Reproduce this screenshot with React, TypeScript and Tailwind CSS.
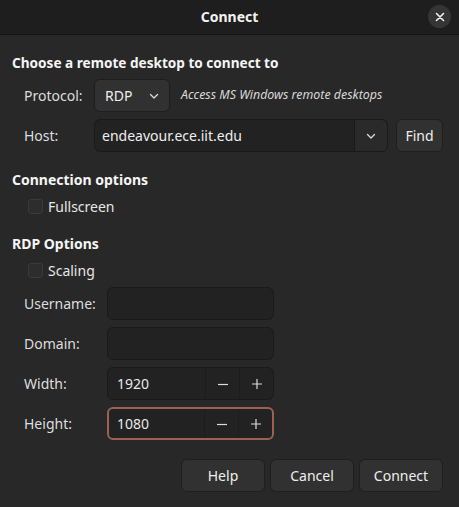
import React from "react";

const font = { fontFamily: '"Noto Sans", "Open Sans", sans-serif' };

function Chevron() {
  return (
    <svg width="12" height="12" viewBox="0 0 12 12" fill="none">
      <path d="M2.5 4.5 L6 8 L9.5 4.5" stroke="#dcdcdc" strokeWidth="1.3" strokeLinecap="round" strokeLinejoin="round" />
    </svg>
  );
}

function Check({ label }: { label: string }) {
  return (
    <div className="flex items-center h-5 pl-[28px]">
      <div className="w-[15px] h-[15px] rounded-[3px] bg-[#2d2d2d] border border-[#3a3a3a]" />
      <span className="ml-[5px] text-[14px] text-[#e6e6e6]">{label}</span>
    </div>
  );
}

function Entry({ label }: { label: string }) {
  return (
    <div className="flex items-center mt-[7px]">
      <span className="w-[107px] shrink-0 pl-[24px] text-[14px] text-[#dedede]">{label}</span>
      <div className="w-[167px] h-[33px] shrink-0 rounded-[6px] bg-[#222222] border border-[#1a1a1a]" />
    </div>
  );
}

function Spin({ label, value, focus }: { label: string; value: string; focus?: boolean }) {
  return (
    <div className="flex items-center mt-[7px]">
      <span className="w-[107px] shrink-0 pl-[24px] text-[14px] text-[#dedede]">{label}</span>
      <div
        className={`w-[167px] h-[33px] shrink-0 rounded-[6px] bg-[#222222] flex items-stretch ${
          focus ? "border-2 border-[#9a6154]" : "border border-[#1a1a1a]"
        }`}
      >
        <div className={`flex-1 flex items-center text-[14px] text-[#e8e8e8] ${focus ? "pl-[8px]" : "pl-[9px]"}`}>{value}</div>
        <div className="w-[34px] flex items-center justify-center border-l border-[#1c1c1c]">
          <svg width="12" height="12" viewBox="0 0 12 12"><path d="M1 6.5 H11" stroke="#dcdcdc" strokeWidth="1.2" /></svg>
        </div>
        <div className="w-[34px] flex items-center justify-center border-l border-[#1c1c1c]">
          <svg width="12" height="12" viewBox="0 0 12 12"><path d="M1 6 H11 M6 1 V11" stroke="#dcdcdc" strokeWidth="1.2" /></svg>
        </div>
      </div>
    </div>
  );
}

export default function App() {
  return (
    <div style={font} className="w-[459px] h-[507px] bg-[#282828] flex flex-col overflow-hidden">
      <div className="h-[35px] shrink-0 bg-[#1e1e1e] border-b border-[#151515] relative flex items-center justify-center">
        <span className="text-[14px] font-bold text-[#f2f2f2] -mt-[2px]">Connect</span>
        <div className="absolute right-[8px] top-[5px] w-[23px] h-[23px] rounded-full bg-[#353535] flex items-center justify-center">
          <svg width="10" height="10" viewBox="0 0 10 10">
            <path d="M1.5 1.5 L8.5 8.5 M8.5 1.5 L1.5 8.5" stroke="#f0f0f0" strokeWidth="1.6" strokeLinecap="round" />
          </svg>
        </div>
      </div>

      <div className="flex flex-col">
        <div className="mt-[18px] pl-[12px] h-5 leading-5 text-[13.6px] font-bold text-[#f5f5f5]">
          Choose a remote desktop to connect to
        </div>

        <div className="flex items-center mt-[6px]">
          <span className="w-[94px] shrink-0 pl-[24px] text-[14px] text-[#dedede]">Protocol:</span>
          <div className="w-[76px] h-[33px] shrink-0 rounded-[6px] bg-[#313131] border border-[#1e1e1e] flex items-center pl-[10px] pr-[9px] justify-between">
            <span className="text-[14px] text-[#eeeeee]">RDP</span>
            <Chevron />
          </div>
          <span className="ml-[11px] text-[12.4px] italic text-[#d8d8d8] whitespace-nowrap">Access MS Windows remote desktops</span>
        </div>

        <div className="flex items-center mt-[7px]">
          <span className="w-[94px] shrink-0 pl-[24px] text-[14px] text-[#dedede]">Host:</span>
          <div className="w-[294px] h-[33px] shrink-0 rounded-[6px] bg-[#222222] border border-[#1a1a1a] flex items-stretch">
            <div className="flex-1 flex items-center pl-[7px] text-[14px] text-[#eeeeee]">endeavour.ece.iit.edu</div>
            <div className="w-[33px] flex items-center justify-center border-l border-[#1a1a1a] bg-[#2a2a2a] rounded-r-[6px]">
              <Chevron />
            </div>
          </div>
          <div className="ml-[8px] w-[47px] h-[33px] shrink-0 rounded-[6px] bg-[#313131] border border-[#1e1e1e] flex items-center justify-center text-[14px] text-[#eeeeee]">
            Find
          </div>
        </div>

        <div className="mt-[18px] pl-[12px] h-5 leading-5 text-[14px] font-bold text-[#f5f5f5]">Connection options</div>
        <div className="mt-[6px]">
          <Check label="Fullscreen" />
        </div>

        <div className="mt-[18px] pl-[12px] h-5 leading-5 text-[14px] font-bold text-[#f5f5f5]">RDP Options</div>
        <div className="mt-[6px]">
          <Check label="Scaling" />
        </div>

        <Entry label="Username:" />
        <Entry label="Domain:" />
        <Spin label="Width:" value="1920" />
        <Spin label="Height:" value="1080" focus />

        <div className="flex justify-end gap-[5px] pr-[16px] mt-[19px]">
          {["Help", "Cancel", "Connect"].map((b) => (
            <div
              key={b}
              className="w-[84px] h-[33px] rounded-[6px] bg-[#313131] border border-[#1e1e1e] flex items-center justify-center text-[14px] text-[#eeeeee]"
            >
              {b}
            </div>
          ))}
        </div>
      </div>
    </div>
  );
}
